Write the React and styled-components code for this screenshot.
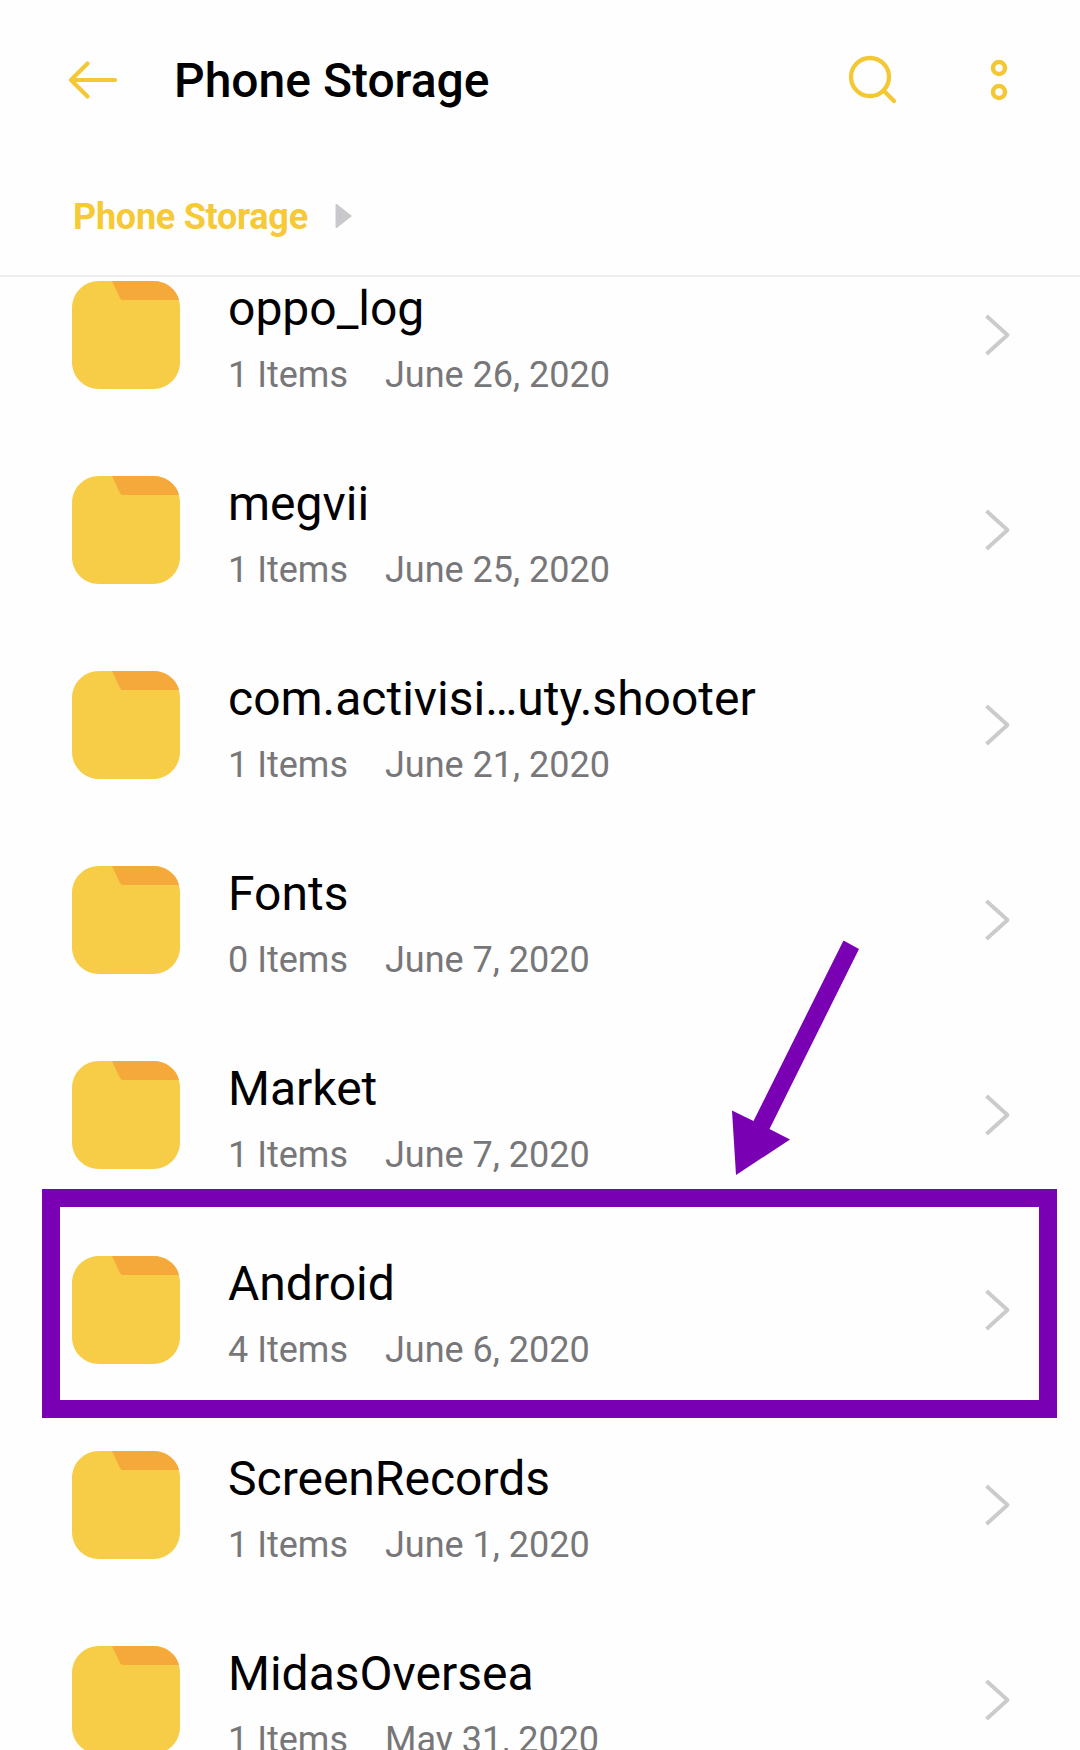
import React from "react";
import styled, { createGlobalStyle } from "styled-components";

const GlobalStyle = createGlobalStyle`
  * { box-sizing: border-box; }
  body { margin: 0; background: #fefefe; }
`;

const Screen = styled.div`
  display: flex;
  flex-direction: column;
  width: 1080px;
  height: 1750px;
  overflow: hidden;
  background: #fefefe;
  color: #000;
  font-family: Roboto, "Liberation Sans", sans-serif;
`;

const Header = styled.header`
  flex: none;
  height: 277px;
  border-bottom: 2px solid #eeeef1;
`;

const AppBar = styled.div`
  display: flex;
  align-items: center;
  height: 160px;
  padding: 0 68px;
`;

const IconButton = styled.button`
  display: flex;
  flex: none;
  padding: 0;
  border: 0;
  background: none;
  margin-right: ${(p) => p.$gap || 0}px;
`;

const Title = styled.h1`
  flex: 1;
  margin: 2px 0 0;
  font-size: 48px;
  font-weight: 500;
  line-height: 60px;
  white-space: nowrap;
`;

const Breadcrumb = styled.nav`
  display: flex;
  align-items: center;
  height: 112px;
  padding: 0 73px;
  gap: 27px;
`;

const Crumb = styled.span`
  color: #f5ca36;
  font-size: 36px;
  font-weight: 700;
  letter-spacing: -0.27px;
  line-height: 44px;
  margin-top: 2px;
`;

const List = styled.main`
  flex: 1;
  min-height: 0;
  overflow: hidden;
`;

const Row = styled.div`
  position: relative;
  display: flex;
  align-items: flex-start;
  height: 195px;
  padding: 4px 69px 0 72px;
`;

const Details = styled.div`
  flex: 1;
  margin: -2px 0 0 48px;
`;

const Name = styled.div`
  font-size: 48px;
  line-height: 60px;
  white-space: nowrap;
`;

const Meta = styled.div`
  display: flex;
  gap: 37px;
  margin-top: 14px;
  color: #777779;
  font-size: 36px;
  line-height: 44px;
  white-space: nowrap;
`;

const ChevronSlot = styled.div`
  display: flex;
  align-items: center;
  height: 108px;
`;

const Highlight = styled.div`
  position: absolute;
  left: 42px;
  top: -63px;
  width: 1015px;
  height: 229px;
  border: 18px solid #7a00b3;
  pointer-events: none;
`;

const Pointer = styled.svg`
  position: absolute;
  left: 732px;
  top: -312px;
`;

const BackIcon = () => (
  <svg width="50" height="40" viewBox="0 0 50 40" fill="none" stroke="#f3c834" strokeWidth="4.2" strokeLinecap="round" strokeLinejoin="round">
    <path d="M19.5 3.5L3 20L19.5 36.5M3 20H47" />
  </svg>
);

const SearchIcon = () => (
  <svg width="50" height="50" viewBox="0 0 50 50" fill="none" stroke="#f3c834" strokeWidth="4.3" strokeLinecap="round">
    <circle cx="22" cy="22" r="19" />
    <path d="M35.5 35.5L46 46" />
  </svg>
);

const MoreIcon = () => (
  <svg width="18" height="42" viewBox="0 0 18 42" fill="none" stroke="#f3c834" strokeWidth="4.5">
    <circle cx="9" cy="9" r="6" />
    <circle cx="9" cy="33" r="6" />
  </svg>
);

const CrumbArrow = () => (
  <svg width="17" height="26" viewBox="0 0 17 26">
    <path d="M1.5 2L15.5 13L1.5 24Z" fill="#c9c8cc" stroke="#c9c8cc" strokeWidth="2" strokeLinejoin="round" />
  </svg>
);

const FolderIcon = () => (
  <svg width="108" height="108" viewBox="0 0 108 108">
    <path d="M27 0H81C96 0 108 12 108 27V81C108 96 96 108 81 108H27C12 108 0 96 0 81V27C0 12 12 0 27 0Z" fill="#f7cc46" />
    <path d="M40 0H81C94 0 104.500 8 107 19H51Q49 19 48 17Z" fill="#f4a93a" />
  </svg>
);

const Chevron = () => (
  <svg width="26" height="44" viewBox="0 0 26 44" fill="none" stroke="#cbcacd" strokeWidth="3.8" strokeLinejoin="round">
    <path d="M1.500 3L22.500 22L1.500 41" />
  </svg>
);

const folders = [
  { name: "oppo_log", items: 1, date: "June 26, 2020" },
  { name: "megvii", items: 1, date: "June 25, 2020" },
  { name: "com.activisi…uty.shooter", items: 1, date: "June 21, 2020" },
  { name: "Fonts", items: 0, date: "June 7, 2020" },
  { name: "Market", items: 1, date: "June 7, 2020" },
  { name: "Android", items: 4, date: "June 6, 2020", marked: true },
  { name: "ScreenRecords", items: 1, date: "June 1, 2020" },
  { name: "MidasOversea", items: 1, date: "May 31, 2020" },
];

export default function App() {
  return (
    <Screen>
      <GlobalStyle />
      <Header>
        <AppBar>
          <IconButton $gap={56} aria-label="Back"><BackIcon /></IconButton>
          <Title>Phone Storage</Title>
          <IconButton $gap={92} aria-label="Search"><SearchIcon /></IconButton>
          <IconButton $gap={4} aria-label="More"><MoreIcon /></IconButton>
        </AppBar>
        <Breadcrumb>
          <Crumb>Phone Storage</Crumb>
          <CrumbArrow />
        </Breadcrumb>
      </Header>
      <List>
        {folders.map((f) => (
          <Row key={f.name}>
            <FolderIcon />
            <Details>
              <Name>{f.name}</Name>
              <Meta>
                <span>{f.items} Items</span>
                <span>{f.date}</span>
              </Meta>
            </Details>
            <ChevronSlot><Chevron /></ChevronSlot>
            {f.marked && (
              <>
                <Highlight />
                <Pointer width="128" height="236" viewBox="0 0 128 236">
                  <path d="M111.500 0.500L127 9L37.500 189L58 199.500L4 235L0 170.500L21.500 181Z" fill="#7a00b3" />
                </Pointer>
              </>
            )}
          </Row>
        ))}
      </List>
    </Screen>
  );
}
